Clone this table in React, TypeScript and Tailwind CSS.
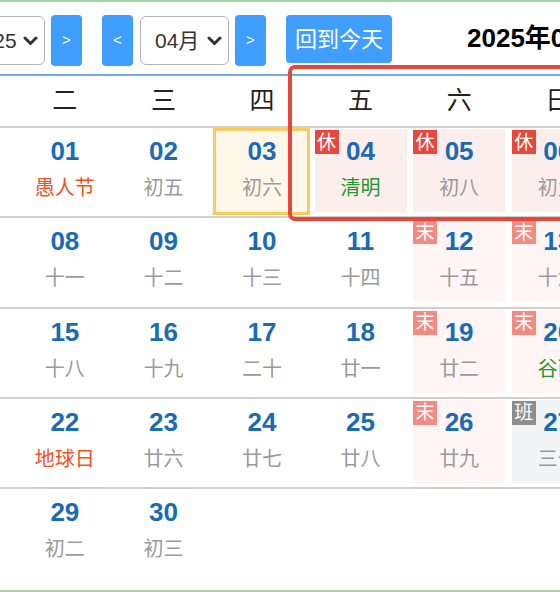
import React from "react";

type Mark = "休" | "末" | "班";

interface DayCell {
  day: string;
  lunar: string;
  tone?: "red" | "green";
  mark?: Mark;
  today?: boolean;
}

const WEEK = ["一", "二", "三", "四", "五", "六", "日"];

const ROWS: (DayCell | null)[][] = [
  [
    null,
    { day: "01", lunar: "愚人节", tone: "red" },
    { day: "02", lunar: "初五" },
    { day: "03", lunar: "初六", today: true },
    { day: "04", lunar: "清明", tone: "green", mark: "休" },
    { day: "05", lunar: "初八", mark: "休" },
    { day: "06", lunar: "初九", mark: "休" },
  ],
  [
    { day: "07", lunar: "初十" },
    { day: "08", lunar: "十一" },
    { day: "09", lunar: "十二" },
    { day: "10", lunar: "十三" },
    { day: "11", lunar: "十四" },
    { day: "12", lunar: "十五", mark: "末" },
    { day: "13", lunar: "十六", mark: "末" },
  ],
  [
    { day: "14", lunar: "十七" },
    { day: "15", lunar: "十八" },
    { day: "16", lunar: "十九" },
    { day: "17", lunar: "二十" },
    { day: "18", lunar: "廿一" },
    { day: "19", lunar: "廿二", mark: "末" },
    { day: "20", lunar: "谷雨", tone: "green", mark: "末" },
  ],
  [
    { day: "21", lunar: "廿四" },
    { day: "22", lunar: "地球日", tone: "red" },
    { day: "23", lunar: "廿六" },
    { day: "24", lunar: "廿七" },
    { day: "25", lunar: "廿八" },
    { day: "26", lunar: "廿九", mark: "末" },
    { day: "27", lunar: "三十", mark: "班" },
  ],
  [
    { day: "28", lunar: "四月" },
    { day: "29", lunar: "初二" },
    { day: "30", lunar: "初三" },
    null,
    null,
    null,
    null,
  ],
];

const FONT = "[font-family:'Liberation_Sans','Noto_Sans_CJK_SC',sans-serif]";

function Chevron() {
  return (
    <svg width="15" height="10" viewBox="0 0 15 10" fill="none">
      <path d="M2 2 L7.5 7.5 L13 2" stroke="#333" strokeWidth="3" strokeLinecap="round" strokeLinejoin="round" />
    </svg>
  );
}

function NavButton({ label }: { label: string }) {
  return (
    <button
      type="button"
      className="flex h-[51px] w-[31px] shrink-0 items-center justify-center rounded-[4px] bg-[#409eff] text-[15px] text-white"
    >
      {label}
    </button>
  );
}

function FakeSelect({ value, width }: { value: string; width: string }) {
  return (
    <div
      className={`flex h-[49px] shrink-0 items-center justify-between rounded-[6px] border border-[#b4b4b4] bg-white pl-[14px] pr-[6px] text-[21px] text-[#333] ${width}`}
    >
      <span>{value}</span>
      <Chevron />
    </div>
  );
}

function Badge({ mark }: { mark: Mark }) {
  const color =
    mark === "休" ? "bg-[#e8473d]" : mark === "末" ? "bg-[#f28b82]" : "bg-[#8e8e8e]";
  return (
    <span
      className={`absolute left-0 top-[1px] flex h-6 w-6 items-center justify-center text-[19px] leading-none text-white ${color}`}
    >
      {mark}
    </span>
  );
}

function Day({ cell }: { cell: DayCell | null }) {
  if (!cell) return <div className="h-[88.25px]" />;

  const bg = cell.today
    ? "bg-[#fff8ea] border-[3px] border-[#f8cb5c] w-[97px] h-[87px] pt-[5px]"
    : cell.mark === "休"
      ? "bg-[#fdeeee] w-[92px] h-[83px] mt-[1px] pt-[7px]"
      : cell.mark === "末"
        ? "bg-[#fff5f5] w-[92px] h-[83px] mt-[1px] pt-[7px]"
        : cell.mark === "班"
          ? "bg-[#f3f4f6] w-[92px] h-[83px] mt-[1px] pt-[7px]"
          : "w-[92px] h-[83px] mt-[1px] pt-[7px]";

  const lunarColor =
    cell.tone === "red"
      ? "text-[#f2511f]"
      : cell.tone === "green"
        ? "text-[#23992f]"
        : "text-[#9a9a9a]";

  return (
    <div className="flex h-[88.25px] justify-center">
      <div className={`relative box-border flex flex-col items-center ${bg}`}>
        {cell.mark && <Badge mark={cell.mark} />}
        <span className="text-[26px] font-bold leading-[30px] text-[#1a6bb5]">{cell.day}</span>
        <span className={`mt-[9px] text-[20px] leading-[26px] ${lunarColor}`}>{cell.lunar}</span>
      </div>
    </div>
  );
}

export default function App() {
  return (
    <div className={`relative h-[600px] w-[560px] overflow-hidden bg-white ${FONT}`}>
      <div className="ml-[-120px] w-[760px] border-y-2 border-[#a3d3a3] pb-[13px]">
        <div className="flex h-[74px] items-center border-b-2 border-[#6eaaee] pl-[38px] pt-[5px]">
          <NavButton label="<" />
          <div className="ml-[6px]">
            <FakeSelect value="2025" width="w-[90px]" />
          </div>
          <div className="ml-[6px]">
            <NavButton label=">" />
          </div>
          <div className="ml-[20px]">
            <NavButton label="<" />
          </div>
          <div className="ml-[7px]">
            <FakeSelect value="04月" width="w-[89px]" />
          </div>
          <div className="ml-[6px]">
            <NavButton label=">" />
          </div>
          <button
            type="button"
            className="mb-[3px] ml-[20px] h-[48px] w-[106px] shrink-0 rounded-[4px] bg-[#409eff] text-[22px] text-white"
          >
            回到今天
          </button>
          <h1 className="mb-[5px] ml-[75px] shrink-0 whitespace-nowrap text-[26px] font-bold text-black">
            2025年04月
          </h1>
        </div>

        <div className="ml-[37px] w-[690px]">
          <div className="grid h-[52px] grid-cols-7 items-center border-b-2 border-[#d0d0d0]">
            {WEEK.map((w) => (
              <div key={w} className="text-center text-[25px] text-[#222]">
                {w}
              </div>
            ))}
          </div>
          {ROWS.map((row, i) => (
            <div
              key={i}
              className={`grid grid-cols-7 ${i < ROWS.length - 1 ? "border-b-2 border-[#d0d0d0]" : ""}`}
            >
              {row.map((cell, j) => (
                <Day key={j} cell={cell} />
              ))}
            </div>
          ))}
        </div>
      </div>

      {/* annotation frame around the holiday days */}
      <div className="pointer-events-none absolute left-[288px] top-[65px] h-[156px] w-[400px] rounded-[7px] border-4 border-[#e8463c]" />
    </div>
  );
}
